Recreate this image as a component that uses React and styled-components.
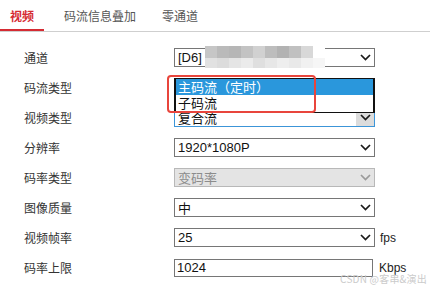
import React from 'react'
import styled, { createGlobalStyle } from 'styled-components'

const GlobalStyle = createGlobalStyle`
  html, body {
    margin: 0;
    padding: 0;
    background: #fff;
  }
  body {
    font-family: "Liberation Sans", "Noto Sans CJK SC", sans-serif;
  }
`

const Page = styled.div`
  position: relative;
  width: 430px;
  height: 289px;
  overflow: hidden;
  background: #fff;
`

const TabBar = styled.div`
  display: flex;
  height: 31px;
  border-bottom: 1px solid #cfcfcf;
`

const Tab = styled.div`
  box-sizing: border-box;
  height: 31px;
  padding: 9px 10px 0 10px;
  margin-right: 5px;
  font-size: 12px;
  line-height: 14px;
  font-family: "Noto Sans CJK SC", sans-serif;
  color: ${(p) => (p.$active ? '#d52b33' : '#555')};
  font-weight: ${(p) => (p.$active ? 700 : 400)};
  border-bottom: 2px solid ${(p) => (p.$active ? '#d52b33' : 'transparent')};
  &:nth-child(2) {
    padding-left: 15px;
  }
  &:nth-child(3) {
    padding-left: 11px;
  }
`

const Form = styled.div`
  padding: 16px 0 0 24px;
`

const Row = styled.div`
  display: flex;
  align-items: center;
  height: 19px;
  margin-bottom: 11px;
`

const Label = styled.div`
  width: 150px;
  font-size: 12px;
  font-family: "Noto Sans CJK SC", sans-serif;
  color: #333;
`

const Field = styled.div`
  position: relative;
  display: flex;
  align-items: center;
`

const SelectBox = styled.div`
  position: relative;
  box-sizing: border-box;
  width: 201px;
  height: 19px;
  display: flex;
  align-items: center;
  padding-left: 3px;
  font-size: 13px;
  font-family: "Liberation Sans", "Noto Sans CJK SC", sans-serif;
  color: ${(p) => (p.$disabled ? '#8c8c8c' : '#111')};
  background: ${(p) => (p.$disabled ? '#e4e4e4' : '#fff')};
  border: 1px solid ${(p) => (p.$disabled ? '#b8b8b8' : p.$focused ? '#3c95d8' : '#767676')};
`

const Arrow = styled.span`
  position: absolute;
  right: 0;
  top: 0;
  bottom: 0;
  width: 18px;
  display: flex;
  align-items: center;
  justify-content: center;
  background: ${(p) => (p.$hover ? '#dcdcdc' : 'transparent')};
`

const TextInput = styled.div`
  box-sizing: border-box;
  width: 199px;
  height: 18px;
  display: flex;
  align-items: center;
  padding-left: 2px;
  font-size: 13px;
  color: #111;
  background: ${(p) => (p.$disabled ? '#f2f2f2' : '#fff')};
  border: 1px solid ${(p) => (p.$disabled ? '#b8b8b8' : '#767676')};
`

const Unit = styled.span`
  margin-left: ${(p) => p.$gap || 5}px;
  font-size: 12px;
  color: #222;
`

const Mosaic = styled.div`
  position: absolute;
  left: 30px;
  top: -3px;
  display: grid;
  grid-template-columns: repeat(10, 12px);
  grid-template-rows: 12px 10px;
`

const Tile = styled.span`
  background: ${(p) => p.$c};
`

const OptionList = styled.div`
  position: absolute;
  left: 0;
  top: 0;
  z-index: 3;
  box-sizing: border-box;
  width: 201px;
  height: 35px;
  background: #fff;
  border: 1px solid #111;
  border-left-width: 2px;
  border-right-width: 2px;
  font-size: 13px;
  font-family: "Noto Sans CJK SC", sans-serif;
`

const Option = styled.div`
  height: 16px;
  line-height: 16px;
  padding-left: 2px;
  color: ${(p) => (p.$selected ? '#fff' : '#111')};
  background: ${(p) => (p.$selected ? '#2a97dc' : '#fff')};
`

const Highlight = styled.div`
  position: absolute;
  left: -7px;
  top: -3px;
  z-index: 4;
  box-sizing: border-box;
  width: 149px;
  height: 38px;
  border: 2px solid #e8453c;
  border-radius: 4px;
`

const Watermark = styled.div`
  position: absolute;
  right: 3px;
  top: 273px;
  font-size: 10px;
  line-height: 12px;
  font-family: "Noto Sans CJK SC", sans-serif;
  color: #cbcbcb;
  letter-spacing: 0.2px;
`

const Chevron = ({ color = '#1a1a1a' }) => (
  <svg width="11" height="7" viewBox="0 0 11 7">
    <polyline points="1,1 5.5,5.5 10,1" fill="none" stroke={color} strokeWidth="1.7" />
  </svg>
)

const topTiles = ['#c6c6c6', '#bababa', '#b6b6b6', '#c3c3c3', '#d1d1d1', '#bdbdbd', '#b2b2b2', '#c0c0c0', '#d8d8d8', '#ffffff']
const bottomTiles = ['#e1e1e1', '#dcdcdc', '#e5e5e5', '#ebebeb', '#dfdfdf', '#e7e7e7', '#eeeeee', '#e9e9e9', '#f1f1f1', '#f6f6f6']

function Select({ value, disabled, focused, hover, children }) {
  return (
    <SelectBox $disabled={disabled} $focused={focused}>
      {value}
      {children}
      <Arrow $hover={hover}>
        <Chevron color={disabled ? '#9a9a9a' : '#1a1a1a'} />
      </Arrow>
    </SelectBox>
  )
}

export default function App() {
  return (
    <Page>
      <GlobalStyle />
      <TabBar>
        <Tab $active>视频</Tab>
        <Tab>码流信息叠加</Tab>
        <Tab>零通道</Tab>
      </TabBar>
      <Form>
        <Row>
          <Label>通道</Label>
          <Field>
            <Select value="[D6]">
              <Mosaic>
                {topTiles.concat(bottomTiles).map((c, i) => (
                  <Tile key={i} $c={c} />
                ))}
              </Mosaic>
            </Select>
          </Field>
        </Row>
        <Row>
          <Label>码流类型</Label>
          <Field>
            <Select />
            <OptionList>
              <Option $selected>主码流（定时）</Option>
              <Option>子码流</Option>
            </OptionList>
            <Highlight />
          </Field>
        </Row>
        <Row>
          <Label>视频类型</Label>
          <Field>
            <Select value="复合流" focused hover />
          </Field>
        </Row>
        <Row>
          <Label>分辨率</Label>
          <Field>
            <Select value="1920*1080P" />
          </Field>
        </Row>
        <Row>
          <Label>码率类型</Label>
          <Field>
            <Select value="变码率" disabled />
          </Field>
        </Row>
        <Row>
          <Label>图像质量</Label>
          <Field>
            <Select value="中" />
          </Field>
        </Row>
        <Row>
          <Label>视频帧率</Label>
          <Field>
            <Select value="25" />
            <Unit>fps</Unit>
          </Field>
        </Row>
        <Row>
          <Label>码率上限</Label>
          <Field>
            <TextInput>1024</TextInput>
            <Unit $gap={6}>Kbps</Unit>
          </Field>
        </Row>
        <Row>
          <Label></Label>
          <Field>
            <TextInput $disabled />
          </Field>
        </Row>
      </Form>
      <Watermark>CSDN @客串&amp;演出</Watermark>
    </Page>
  )
}
